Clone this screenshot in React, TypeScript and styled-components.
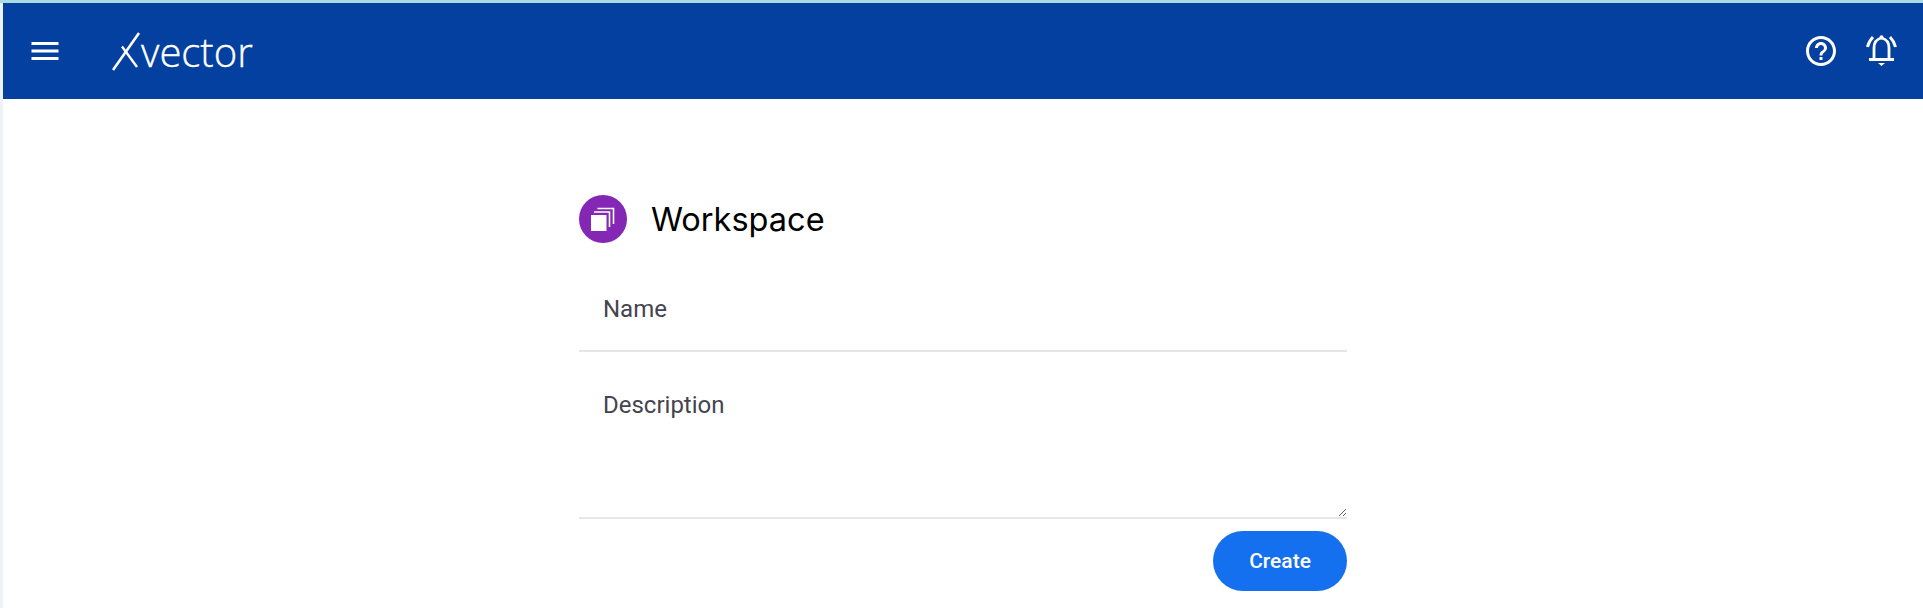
import { createGlobalStyle, styled } from "styled-components";
import { MdHelpOutline, MdMenu } from "react-icons/md";

const GlobalStyle = createGlobalStyle`
  html, body {
    margin: 0;
    padding: 0;
    background: #fff;
    font-family: Roboto, "Liberation Sans", sans-serif;
  }
  * {
    box-sizing: border-box;
  }
`;

function App() {
  return (
    <>
      <GlobalStyle />
      <Page>
        <Frame>
          <Header>
            <MenuButton aria-label="Menu">
              <MdMenu size={36} />
            </MenuButton>
            <Logo>
              <LogoMark width="30" height="40" viewBox="0 0 30 40" aria-hidden="true">
                <path d="M1 38 L27 1" stroke="#fff" strokeWidth="2.6" fill="none" />
                <path d="M10 14.500 L25 35" stroke="#fff" strokeWidth="2.4" fill="none" />
              </LogoMark>
              <LogoText>vector</LogoText>
            </Logo>
            <HeaderIcons>
              <HelpIcon aria-label="Help">
                <MdHelpOutline size={36} />
              </HelpIcon>
              <BellIcon aria-label="Notifications">
                <svg width="31" height="31" viewBox="0 0 31 31" fill="none" stroke="#fff" aria-hidden="true">
                  <path d="M1.500 12 C2.500 8 4.500 4.500 7 2" strokeWidth="3" />
                  <path d="M29.500 12 C28.500 8 26.500 4.500 24 2" strokeWidth="3" />
                  <path d="M8 24 V13 C8 7.500 11 4 15.500 3 C20 4 23 7.500 23 13 V24" strokeWidth="2.800" />
                  <circle cx="15.500" cy="2.200" r="2" fill="#fff" stroke="none" />
                  <path d="M3 24.500 H28" strokeWidth="3" />
                  <path d="M12 28 H19 L15.500 31 Z" fill="#fff" stroke="none" />
                </svg>
              </BellIcon>
            </HeaderIcons>
          </Header>
          <Main>
            <Form>
              <TitleRow>
                <Badge>
                  <svg width="24" height="24" viewBox="0 0 24 24" aria-hidden="true">
                    <rect x="0" y="8" width="15.500" height="16" fill="#fff" />
                    <path d="M3 5 H18.500 V20" stroke="#fff" strokeWidth="1.600" fill="none" />
                    <path d="M6.500 1.500 H22.500 V17" stroke="#fff" strokeWidth="1.600" fill="none" />
                  </svg>
                </Badge>
                <Title>Workspace</Title>
              </TitleRow>
              <NameInput placeholder="Name" />
              <DescriptionInput placeholder="Description" />
              <Actions>
                <CreateButton type="button">Create</CreateButton>
              </Actions>
            </Form>
          </Main>
        </Frame>
      </Page>
    </>
  );
}

const Page = styled.div`
  height: 608px;
  overflow: hidden;
  background: #a9dbe3;
  padding-top: 3px;
`;
const Frame = styled.div`
  height: 605px;
  padding-left: 3px;
  background: #eef2f5;
  display: flex;
  flex-direction: column;
`;
const Header = styled.header`
  height: 96px;
  flex: none;
  background: #0340a0;
  color: #fff;
  display: flex;
  align-items: center;
  padding: 0 24px 0 24px;
`;
const MenuButton = styled.div`
  display: flex;
  width: 36px;
  margin-top: -1px;
`;
const Logo = styled.div`
  display: flex;
  align-items: flex-end;
  margin-left: 49px;
  margin-top: 1px;
`;
const LogoMark = styled.svg`
  display: block;
  margin-right: -1px;
`;
const LogoText = styled.span`
  font-family: "Open Sans", sans-serif;
  font-weight: 300;
  font-size: 40px;
  line-height: 40px;
  color: #fff;
  -webkit-text-stroke: 0.35px #fff;
  margin-bottom: 0;
`;
const HeaderIcons = styled.div`
  margin-left: auto;
  display: flex;
  align-items: center;
  gap: 24px;
`;
const HelpIcon = styled.div`
  display: flex;
  width: 36px;
`;
const BellIcon = styled.div`
  display: flex;
  width: 36px;
  justify-content: center;
  margin-top: -1px;
`;
const Main = styled.main`
  flex: 1;
  background: #fff;
  display: flex;
  justify-content: center;
`;
const Form = styled.form`
  width: 768px;
  padding-top: 96px;
  display: flex;
  flex-direction: column;
`;
const TitleRow = styled.div`
  display: flex;
  align-items: center;
  gap: 24px;
  height: 48px;
  margin-bottom: 12px;
`;
const Badge = styled.div`
  width: 48px;
  height: 48px;
  border-radius: 50%;
  background: #8427b5;
  display: flex;
  align-items: center;
  justify-content: center;
`;
const Title = styled.h1`
  margin: 0;
  font-family: Inter, sans-serif;
  font-weight: 400;
  font-size: 32.5px;
  color: #000;
`;
const fieldText = `
  width: 100%;
  border: none;
  border-bottom: 2px solid #e6e6e8;
  outline: none;
  background: #fff;
  padding: 0 24px;
  font-family: Roboto, sans-serif;
  font-size: 24px;
  color: #44444f;
  &::placeholder {
    color: #44444f;
    opacity: 1;
  }
`;
const NameInput = styled.input`
  ${fieldText}
  height: 97px;
  padding-top: 12px;
`;
const DescriptionInput = styled.textarea`
  ${fieldText}
  display: block;
  height: 167px;
  padding-top: 39px;
  resize: vertical;
`;
const Actions = styled.div`
  display: flex;
  justify-content: flex-end;
  margin-top: 12px;
`;
const CreateButton = styled.button`
  width: 134px;
  height: 60px;
  border: none;
  border-radius: 30px;
  background: #1570ef;
  color: #fff;
  font-family: Roboto, sans-serif;
  font-weight: 500;
  font-size: 21px;
`;

export default App;
